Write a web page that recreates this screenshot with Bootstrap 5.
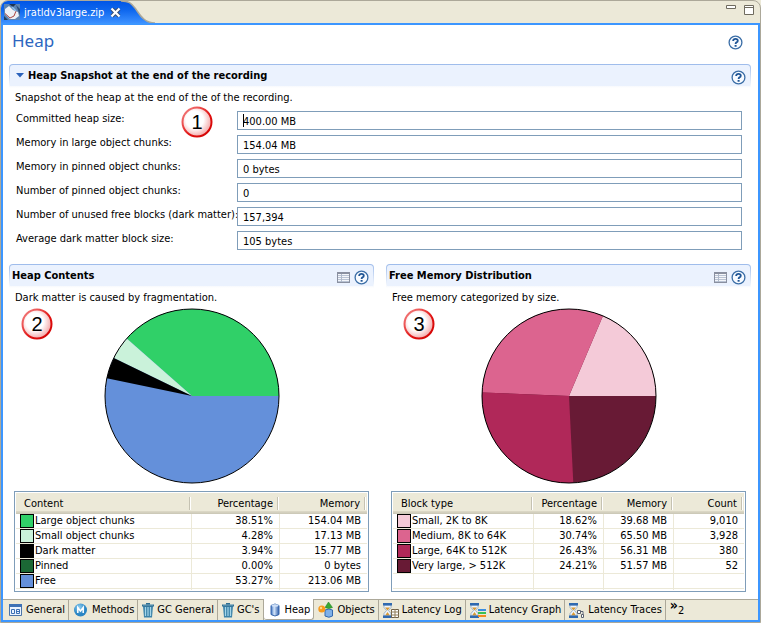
<!DOCTYPE html>
<html lang="en">
<head>
<meta charset="utf-8">
<meta name="viewport" content="width=device-width, initial-scale=1">
<title>jratldv3large.zip - Heap</title>
<link href="https://cdn.jsdelivr.net/npm/bootstrap@5.3.0/dist/css/bootstrap.min.css" rel="stylesheet">
<style>
  :root { --blue: #3c96ff; --face: #ece9d8; --edge: #aca899; --field: #7f9db9; }
  body { font: 11px/15px "DejaVu Sans Condensed", "DejaVu Sans", sans-serif; color: #000; background: var(--face); }
  .editor { border: 1px solid var(--edge); border-radius: 8px 8px 0 0; overflow: hidden; }
  .editor-tabs { height: 22px; }
  .file-tab { background: linear-gradient(#0055e6, #0d66ee 40%, #3c90ff); color: #fff; padding: 0 0 0 3px; height: 22px; }
  .file-tab button { border: 0; background: none; padding: 0; line-height: 0; margin-left: 6px; }
  .win-tools { gap: 8px; padding: 4px 6px 0 0; }
  .winbtn { border: 0; background: none; padding: 0; line-height: 0; }
  .pane { border: 2px solid var(--blue); background: #fff; }
  .form-area { padding: 0 7px 7px 6px; }
  .form-title { font: 400 17px/20px "Noto Sans", "DejaVu Sans", sans-serif; color: #2d66bf; margin: 0; }
  .form-head { padding: 6px 8px 0 3px; height: 39px; }
  .help { border: 0; background: none; padding: 0; line-height: 0; }
  .sec-head { height: 24px; border: 1px solid transparent; border-bottom: 0; border-radius: 4px 4px 0 0; padding: 0 4px 2px 2px;
    background: linear-gradient(#ebf2fe, #ebf2fe) 0 0 / 100% 21px no-repeat padding-box, linear-gradient(#9dbbeb, #fff) border-box; }
  .sec-head h2 { font: bold 11px/15px "DejaVu Sans Condensed", "DejaVu Sans", sans-serif; margin: 0; }
  .sec-note { margin: 0; padding: 2px 6px 0; }
  .fields { display: grid; grid-template-columns: 221px 1fr; row-gap: 5px; padding: 6px 9px 0 7px; }
  .fields input { width: 100%; height: 19px; border: 1px solid var(--field); border-radius: 0; padding: 1px 5px 0; font: inherit; color: #000; outline: 0; display: block; }
  .caret { position: absolute; left: 6px; top: 3px; width: 1px; height: 13px; background: #000; }
  .callout { position: absolute; line-height: 0; }
  .callout text { font: 20px "Liberation Sans", Arial, sans-serif; }
  .charts { margin-top: 14px; gap: 12px; }
  .chart-sec { flex: 1 1 0; min-width: 0; }
  .pie { display: block; margin: 3px auto 7px; }
  .grid-box { border: 1px solid var(--field); padding: 1px 1px 2px; margin: 0 5px; height: 101px; }
  .data-grid { width: 100%; height: 97px; table-layout: fixed; border-collapse: separate; border-spacing: 0; }
  .data-grid th { height: 21px; font-weight: 400; padding: 0 7px; background: linear-gradient(var(--face) 18px, #dedac8 18px, #c9c6b5); position: relative; }
  .data-grid th::after { content: ""; position: absolute; right: 1px; top: 4px; width: 2px; height: 13px; background: linear-gradient(90deg, #c5c2b2 50%, #fff 50%); }
  .data-grid td { height: 15px; line-height: 14px; padding: 0 6px; border-right: 1px solid var(--face); border-bottom: 1px solid var(--face); white-space: nowrap; }
  .data-grid td:last-child { border-right: 0; }
  .data-grid th:first-child { padding-left: 8px; }
  .data-grid td:first-child { padding: 0 0 0 4px; }
  .data-grid .tail td { height: 1px; border-bottom: 0; line-height: 0; }
  .swatch { display: inline-block; width: 14px; height: 14px; border: 1px solid #000; vertical-align: top; margin-right: 1px; }
  .c-large { background: #30d068; } .c-small { background: #caf2da; } .c-dark { background: #000; } .c-pin { background: #1b6835; } .c-free { background: #6490da; }
  .m-small { background: #f4cad8; } .m-med { background: #dc648f; } .m-large { background: #b02859; } .m-very { background: #681a35; }
  .page-tabs { background: var(--face); border-top: 1px solid var(--edge); height: 21px; }
  .page-tabs button { border: 0; border-right: 1px solid var(--edge); background: none; padding: 0 3px 0 4px; white-space: nowrap; color: #000; height: 20px; line-height: 18px; display: flex; align-items: center; gap: 3px; }
  .page-tabs .current { background: #fff; margin-top: -1px; height: 21px; padding-top: 2px; border-bottom: 1px solid var(--edge); border-radius: 0 0 3px 3px; }
  .page-tabs svg { flex: none; }
  .page-tabs .more { align-items: flex-start; gap: 0; border: 0; line-height: 14px; }
  .more b { font-size: 14px; line-height: 10px; font-weight: 600; }
  .more span { padding-top: 4px; }
</style>
<script src="https://cdn.jsdelivr.net/npm/bootstrap@5.3.0/dist/js/bootstrap.bundle.min.js"></script>
</head>
<body>
<svg width="0" height="0" class="position-absolute" aria-hidden="true">
  <defs>
    <linearGradient id="gTab" x2="0" y2="1"><stop stop-color="#0055e6"/><stop offset=".4" stop-color="#0d66ee"/><stop offset="1" stop-color="#3c90ff"/></linearGradient>
    <radialGradient id="gBall" cx=".42" cy=".42" r=".6"><stop offset=".5" stop-color="#fff"/><stop offset="1" stop-color="#f3a5a5"/></radialGradient>
    <linearGradient id="gRing" x2="1" y2="1"><stop stop-color="#f58a8a"/><stop offset=".6" stop-color="#e01010"/><stop offset="1" stop-color="#d00000"/></linearGradient>
    <linearGradient id="gCyl"><stop stop-color="#3c70c0"/><stop offset=".4" stop-color="#d5e6fa"/><stop offset="1" stop-color="#2c5caa"/></linearGradient>
    <radialGradient id="gM" cx=".4" cy=".3"><stop stop-color="#8fd0f2"/><stop offset="1" stop-color="#2b86c4"/></radialGradient>
    <symbol id="help" viewBox="0 0 15 15"><circle cx="7.5" cy="7.5" r="6.4" fill="#f8fbff" stroke="#3a6da6" stroke-width="1.3"/><path d="M5.2 6.1V5.6Q5.3 3.9 7.5 3.9T9.8 5.8Q9.8 6.8 8.5 7.4Q7.6 7.9 7.6 9" fill="none" stroke="#1f5596" stroke-width="1.8"/><path d="M6.6 10h2v1.7h-2z" fill="#1f5596"/></symbol>
    <symbol id="list" viewBox="0 0 13 11"><path d="M0 0h13v11H0z" fill="#8a90a0"/><path d="M1 2h11v8H1z" fill="#f4f6fa"/><path d="M1 3.500h11M1 5.500h11M1 7.500h11M1 9.500h11" stroke="#b9c3d4"/><path d="M4.500 2v8" stroke="#b0bacb"/></symbol>
    <symbol id="trash" viewBox="0 0 12 16"><path d="M1 4h10l-1 11.500H2z" fill="#3c83a9"/><path d="M3.500 5v9M6 5v9M8.500 5v9" stroke="#a5d6ea" stroke-width="1.200"/><path d="M0 2.500h12v2H0zM4 1h4v1.500H4z" fill="#2f6e91"/><path d="M1 3h10" stroke="#a9d4e8" stroke-width=".6"/></symbol>
    <symbol id="glass" viewBox="0 0 9 15"><path d="M1 2V4.500L3.500 7.500L1 10.500V13H8V10.500L5.500 7.500L8 4.500V2z" fill="#eef5fc" stroke="#8ca5c0" stroke-width=".8"/><path d="M2 4.500h5L4.500 7.500zM4.500 9L7 12.500H2z" fill="#d99a35"/><path d="M0 0h9v2.500H0zM0 12.500h9V15H0z" fill="#2f69b0"/></symbol>
  </defs>
</svg>

<div class="editor min-vh-100 d-flex flex-column">
  <header class="editor-tabs d-flex align-items-start">
    <div class="file-tab d-flex align-items-center">
      <svg width="16" height="16" viewBox="0 0 16 16" class="me-1" aria-hidden="true"><path d="M0 0h16v16H0z" fill="#5b84b3"/><path d="M5 0h7l-3 3z" fill="#1e3350"/><path d="M12 1l4 4v6z" fill="#274b78"/><path d="M1 5l4-3 4 4 5 2 1 4-4 3H6L1 10z" fill="#eef1f4"/><path d="M1 9.500l5 4.500 4-2 2-5" fill="none" stroke="#a8443f"/><path d="M8 3l4 4" stroke="#8fc0ea" stroke-width="1.500"/><path d="M0 12l4 4H0z" fill="#24405f"/></svg>
      <span>jratldv3large.zip</span>
      <button type="button" aria-label="Close tab"><svg width="11" height="11" viewBox="0 0 11 11"><path d="M2 2l7 7M9 2L2 9" stroke="#3b4d6d" stroke-width="4"/><path d="M1.500 1.500l8 8M9.500 1.500l-8 8" stroke="#fff" stroke-width="2.200"/></svg></button>
    </div>
    <svg width="34" height="22" viewBox="0 0 34 22" aria-hidden="true"><path d="M0 0C8 0 10 2 14 7S22 22 34 22H0z" fill="url(#gTab)"/><path d="M0 0C8 0 10 2 14 7S22 22 34 22" fill="none" stroke="#aca899" stroke-width="1.500"/></svg>
    <div class="win-tools ms-auto d-flex">
      <button type="button" class="winbtn" aria-label="Minimize"><svg width="10" height="10"><path d="M.5 .5h9v3h-9z" fill="#fff" stroke="#6f6b5f"/></svg></button>
      <button type="button" class="winbtn" aria-label="Maximize"><svg width="10" height="10"><path d="M.5 .5h9v9h-9zM0 2.500h10" fill="#fff" stroke="#6f6b5f"/></svg></button>
    </div>
  </header>

  <div class="pane flex-grow-1 d-flex flex-column">
    <main class="form-area flex-grow-1">
      <div class="form-head d-flex justify-content-between align-items-start">
        <h1 class="form-title">Heap</h1>
        <button type="button" class="help pt-1" aria-label="Help"><svg width="15" height="15"><use href="#help"/></svg></button>
      </div>

      <section class="position-relative">
        <div class="sec-head d-flex align-items-center">
          <svg width="8" height="5" viewBox="0 0 8 5" class="ms-1" aria-hidden="true"><path d="M0 0h8L4 4.500z" fill="#2b62bb"/></svg>
          <h2 class="ms-1">Heap Snapshot at the end of the recording</h2>
          <button type="button" class="help ms-auto pt-1" aria-label="Help"><svg width="15" height="15"><use href="#help"/></svg></button>
        </div>
        <p class="sec-note">Snapshot of the heap at the end of the of the recording.</p>
        <form class="fields">
          <label for="f1">Committed heap size:</label><div class="position-relative"><input id="f1" type="text" value="400.00 MB" readonly><i class="caret"></i></div>
          <label for="f2">Memory in large object chunks:</label><div><input id="f2" type="text" value="154.04 MB" readonly></div>
          <label for="f3">Memory in pinned object chunks:</label><div><input id="f3" type="text" value="0 bytes" readonly></div>
          <label for="f4">Number of pinned object chunks:</label><div><input id="f4" type="text" value="0" readonly></div>
          <label for="f5" class="text-nowrap">Number of unused free blocks (dark matter):</label><div><input id="f5" type="text" value="157,394" readonly></div>
          <label for="f6">Average dark matter block size:</label><div><input id="f6" type="text" value="105 bytes" readonly></div>
        </form>
        <div class="callout" style="left:172px;top:42px"><svg width="32" height="32"><circle cx="16" cy="16" r="14.500" fill="url(#gBall)" stroke="url(#gRing)" stroke-width="2"/><text x="16" y="23" text-anchor="middle">1</text></svg></div>
      </section>

      <div class="charts d-flex">
        <section class="chart-sec position-relative">
          <div class="sec-head d-flex align-items-center">
            <h2>Heap Contents</h2>
            <button type="button" class="help ms-auto me-1 pt-1" aria-label="Show table"><svg width="13" height="11"><use href="#list"/></svg></button>
            <button type="button" class="help pt-1" aria-label="Help"><svg width="15" height="15"><use href="#help"/></svg></button>
          </div>
          <p class="sec-note">Dark matter is caused by fragmentation.</p>
          <svg class="pie" width="176" height="176" viewBox="-88 -88 176 176" role="img" aria-label="Heap contents">
            <circle r="87" fill="#6490da"/>
            <path d="M0 0H87A87 87 0 0 0 -65.300 -57.500z" fill="#30d068"/>
            <path d="M0 0L-65.300 -57.500A87 87 0 0 0 -78.200 -38.100z" fill="#caf2da"/>
            <path d="M0 0L-78.200 -38.100A87 87 0 0 0 -85.200 -17.800z"/>
            <circle r="87" fill="none" stroke="#000"/>
          </svg>
          <div class="grid-box">
            <table class="data-grid">
              <colgroup><col><col width="88"><col width="87"></colgroup>
              <thead><tr><th>Content</th><th class="text-end">Percentage</th><th class="text-end">Memory</th></tr></thead>
              <tbody>
                <tr><td><i class="swatch c-large"></i>Large object chunks</td><td class="text-end">38.51%</td><td class="text-end">154.04 MB</td></tr>
                <tr><td><i class="swatch c-small"></i>Small object chunks</td><td class="text-end">4.28%</td><td class="text-end">17.13 MB</td></tr>
                <tr><td><i class="swatch c-dark"></i>Dark matter</td><td class="text-end">3.94%</td><td class="text-end">15.77 MB</td></tr>
                <tr><td><i class="swatch c-pin"></i>Pinned</td><td class="text-end">0.00%</td><td class="text-end">0 bytes</td></tr>
                <tr><td><i class="swatch c-free"></i>Free</td><td class="text-end">53.27%</td><td class="text-end">213.06 MB</td></tr>
                <tr class="tail"><td></td><td></td><td></td></tr>
              </tbody>
            </table>
          </div>
          <div class="callout" style="left:12px;top:44px"><svg width="32" height="32"><circle cx="16" cy="16" r="14.500" fill="url(#gBall)" stroke="url(#gRing)" stroke-width="2"/><text x="16" y="23" text-anchor="middle">2</text></svg></div>
        </section>

        <section class="chart-sec position-relative">
          <div class="sec-head d-flex align-items-center">
            <h2>Free Memory Distribution</h2>
            <button type="button" class="help ms-auto me-1 pt-1" aria-label="Show table"><svg width="13" height="11"><use href="#list"/></svg></button>
            <button type="button" class="help pt-1" aria-label="Help"><svg width="15" height="15"><use href="#help"/></svg></button>
          </div>
          <p class="sec-note">Free memory categorized by size.</p>
          <svg class="pie" width="176" height="176" viewBox="-88 -88 176 176" role="img" aria-label="Free memory distribution">
            <circle r="87" fill="#681a35"/>
            <path d="M0 0H87A87 87 0 0 0 33.900 -80.100z" fill="#f4cad8"/>
            <path d="M0 0L33.900 -80.100A87 87 0 0 0 -86.900 -3.500z" fill="#dc648f"/>
            <path d="M0 0L-86.900 -3.500A87 87 0 0 0 4.300 86.900z" fill="#b02859"/>
            <circle r="87" fill="none" stroke="#000"/>
          </svg>
          <div class="grid-box">
            <table class="data-grid">
              <colgroup><col><col width="70"><col width="70"><col width="70"></colgroup>
              <thead><tr><th>Block type</th><th class="text-end">Percentage</th><th class="text-end">Memory</th><th class="text-end">Count</th></tr></thead>
              <tbody>
                <tr><td><i class="swatch m-small"></i>Small, 2K to 8K</td><td class="text-end">18.62%</td><td class="text-end">39.68 MB</td><td class="text-end">9,010</td></tr>
                <tr><td><i class="swatch m-med"></i>Medium, 8K to 64K</td><td class="text-end">30.74%</td><td class="text-end">65.50 MB</td><td class="text-end">3,928</td></tr>
                <tr><td><i class="swatch m-large"></i>Large, 64K to 512K</td><td class="text-end">26.43%</td><td class="text-end">56.31 MB</td><td class="text-end">380</td></tr>
                <tr><td><i class="swatch m-very"></i>Very large, &gt; 512K</td><td class="text-end">24.21%</td><td class="text-end">51.57 MB</td><td class="text-end">52</td></tr>
                <tr><td></td><td></td><td></td><td></td></tr>
                <tr class="tail"><td></td><td></td><td></td><td></td></tr>
              </tbody>
            </table>
          </div>
          <div class="callout" style="left:17px;top:44px"><svg width="32" height="32"><circle cx="16" cy="16" r="14.500" fill="url(#gBall)" stroke="url(#gRing)" stroke-width="2"/><text x="16" y="23" text-anchor="middle">3</text></svg></div>
        </section>
      </div>
    </main>

    <nav class="page-tabs d-flex" aria-label="Pages">
      <button type="button"><svg width="16" height="14" viewBox="0 0 16 14"><path d="M2.500 1.500h12v11h-12z" fill="#eaf3ff" stroke="#4b74a8"/><path d="M2 1h13v3H2z" fill="#3d71b5"/><path d="M4.500 6.500h3v4h-3zM9.500 6.500h3v4h-3zM9 8.500h4" fill="none" stroke="#3a6fb3"/></svg>General</button>
      <button type="button"><svg width="16" height="14" viewBox="0 0 16 14"><circle cx="7.500" cy="7" r="6.500" fill="url(#gM)"/><path d="M4.800 10V4.500L7.500 8l2.700-3.500V10" fill="none" stroke="#fff" stroke-width="1.500"/></svg>Methods</button>
      <button type="button"><svg width="12" height="16"><use href="#trash" width="12" height="16"/></svg>GC General</button>
      <button type="button"><svg width="12" height="16"><use href="#trash" width="12" height="16"/></svg>GC's</button>
      <button type="button" class="current"><svg width="14" height="14" viewBox="0 0 14 14"><path d="M3 2.500Q7 -.5 11 2.500v9q-4 3-8 0z" fill="url(#gCyl)" stroke="#3967ac"/><ellipse cx="7" cy="2.500" rx="3.500" ry="1.300" fill="#cfe0f7"/></svg>Heap</button>
      <button type="button"><svg width="16" height="16" viewBox="0 0 16 16"><path d="M7 8q4-2 7.500 0v6q-3.500 2.500-7.500 0z" fill="#7fb0e8" stroke="#3468ad"/><path d="M10.500 0l4 5.500q-4 2-7.500 0z" fill="#38a832" stroke="#1d7c1b" stroke-width=".5"/><circle cx="3.800" cy="7" r="3.500" fill="#f79a1c"/><circle cx="3" cy="6" r="1.200" fill="#ffd88a"/></svg>Objects</button>
      <button type="button"><svg width="16" height="15"><use href="#glass" width="9" height="15"/><path d="M8.500 6.500h7v8h-7z" fill="#fff" stroke="#6f6048"/><path d="M8 9h8M8 12h8M12 6v9" stroke="#8f7c58"/></svg>Latency Log</button>
      <button type="button"><svg width="16" height="15"><use href="#glass" width="9" height="15"/><path d="M8 7h8" stroke="#3b8de0" stroke-width="2"/><path d="M8 10h8" stroke="#3cc052" stroke-width="2"/><path d="M8 13h8" stroke="#f58b1e" stroke-width="2"/></svg>Latency Graph</button>
      <button type="button"><svg width="16" height="15"><use href="#glass" width="9" height="15"/><path d="M8.500 7.500h3v3h-3zM12.500 11.500h2v3h-2zM12 8.500h2v3" fill="#fff" stroke="#5a6270"/></svg>Latency Traces</button>
      <button type="button" class="more" aria-label="2 more pages"><b>»</b><span>2</span></button>
    </nav>
  </div>
</div>
</body>
</html>
